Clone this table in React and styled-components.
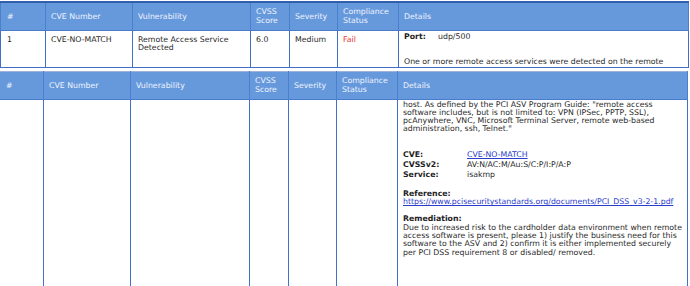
import React from 'react';
import styled, { createGlobalStyle } from 'styled-components';

const GlobalStyle = createGlobalStyle`
  html, body {
    margin: 0;
    padding: 0;
    background: #fff;
  }
  body {
    width: 690px;
    height: 286px;
    overflow: hidden;
    font-family: "DejaVu Sans", Verdana, sans-serif;
  }
`;

const Page = styled.div`
  width: 690px;
  display: flex;
  flex-direction: column;
`;

const Table = styled.table`
  width: 689px;
  table-layout: fixed;
  border-collapse: collapse;
  font-size: 7.8px;
  line-height: 8.33px;
  color: #2a2a2a;
  margin-top: ${(p) => (p.$first ? '1px' : '3px')};
  margin-left: ${(p) => (p.$first ? '0' : '-1px')};
  border-top: ${(p) => (p.$first ? '2px solid #2f5fae' : '1px solid #9fb3d6')};
`;

const HeadCell = styled.th`
  height: 28px;
  box-sizing: border-box;
  background: #6699dc;
  color: #eef3fc;
  font-weight: normal;
  text-align: left;
  padding: 0 5px;
  line-height: 9px;
  border-left: 1px solid #4d7fd0;
  border-right: 1px solid #4d7fd0;
  border-bottom: 1px solid #4a7bcc;
  vertical-align: middle;
  &:first-child {
    padding-left: 6px;
  }
`;

const Cell = styled.td`
  vertical-align: top;
  padding: ${(p) => (p.$tight ? '1px 4px 0 5px' : '5px 5px 0 5px')};
  border-left: 1px solid #3f6fc6;
  border-right: 1px solid #3f6fc6;
  border-bottom: ${(p) => (p.$open ? 'none' : '1px solid #3f6fc6')};
  height: ${(p) => p.$height}px;
  box-sizing: border-box;
  overflow: hidden;
  &:first-child {
    padding-left: 6px;
  }
`;

const FailText = styled.span`
  color: #e8322b;
`;

const KeyValue = styled.div`
  display: grid;
  grid-template-columns: ${(p) => p.$keyWidth}px 1fr;
  margin-top: ${(p) => p.$gap || 0}px;
  > div {
    height: 10px;
    line-height: 10px;
  }
`;

const Key = styled.div`
  font-weight: bold;
  color: #1e1e1e;
`;

const Paragraph = styled.div`
  margin-top: ${(p) => p.$gap || 0}px;
`;

const Heading = styled.div`
  font-weight: bold;
  color: #1e1e1e;
  margin-top: ${(p) => p.$gap || 0}px;
`;

const Link = styled.a`
  color: #2c3ccc;
  text-decoration: underline;
`;

const firstCols = [45, 87, 118, 39, 48, 61, 290];
const secondCols = [44, 87, 119, 39, 48, 61, 290];

const headers = [
  '#',
  'CVE Number',
  'Vulnerability',
  <>CVSS<br />Score</>,
  'Severity',
  <>Compliance<br />Status</>,
  'Details',
];

const Head = () => (
  <thead>
    <tr>
      {headers.map((h, i) => (
        <HeadCell key={i}>{h}</HeadCell>
      ))}
    </tr>
  </thead>
);

const Cols = ({ widths }) => (
  <colgroup>
    {widths.map((w, i) => (
      <col key={i} style={{ width: w }} />
    ))}
  </colgroup>
);

export default function App() {
  return (
    <Page>
      <GlobalStyle />
      <Table $first>
        <Cols widths={firstCols} />
        <Head />
        <tbody>
          <tr>
            <Cell $height={37}>1</Cell>
            <Cell>CVE-NO-MATCH</Cell>
            <Cell>Remote Access Service Detected</Cell>
            <Cell>6.0</Cell>
            <Cell>Medium</Cell>
            <Cell><FailText>Fail</FailText></Cell>
            <Cell $tight>
              <KeyValue $keyWidth={34}>
                <Key>Port:</Key>
                <div>udp/500</div>
              </KeyValue>
              <Paragraph $gap={16}>
                One or more remote access services were detected on the remote
              </Paragraph>
            </Cell>
          </tr>
        </tbody>
      </Table>
      <Table>
        <Cols widths={secondCols} />
        <Head />
        <tbody>
          <tr>
            <Cell $height={200} $open />
            <Cell $open />
            <Cell $open />
            <Cell $open />
            <Cell $open />
            <Cell $open />
            <Cell $tight $open>
              <Paragraph>
                host. As defined by the PCI ASV Program Guide: "remote access
                software includes, but is not limited to: VPN (IPSec, PPTP, SSL),
                pcAnywhere, VNC, Microsoft Terminal Server, remote web-based
                administration, ssh, Telnet."
              </Paragraph>
              <KeyValue $keyWidth={64} $gap={16}>
                <Key>CVE:</Key>
                <div><Link>CVE-NO-MATCH</Link></div>
                <Key>CVSSv2:</Key>
                <div>AV:N/AC:M/Au:S/C:P/I:P/A:P</div>
                <Key>Service:</Key>
                <div>isakmp</div>
              </KeyValue>
              <Heading $gap={10}>Reference:</Heading>
              <div>
                <Link>https://www.pcisecuritystandards.org/documents/PCI_DSS_v3-2-1.pdf</Link>
              </div>
              <Heading $gap={9}>Remediation:</Heading>
              <Paragraph>
                Due to increased risk to the cardholder data environment when remote
                access software is present, please 1) justify the business need for this
                software to the ASV and 2) confirm it is either implemented securely
                per PCI DSS requirement 8 or disabled/ removed.
              </Paragraph>
            </Cell>
          </tr>
        </tbody>
      </Table>
    </Page>
  );
}
